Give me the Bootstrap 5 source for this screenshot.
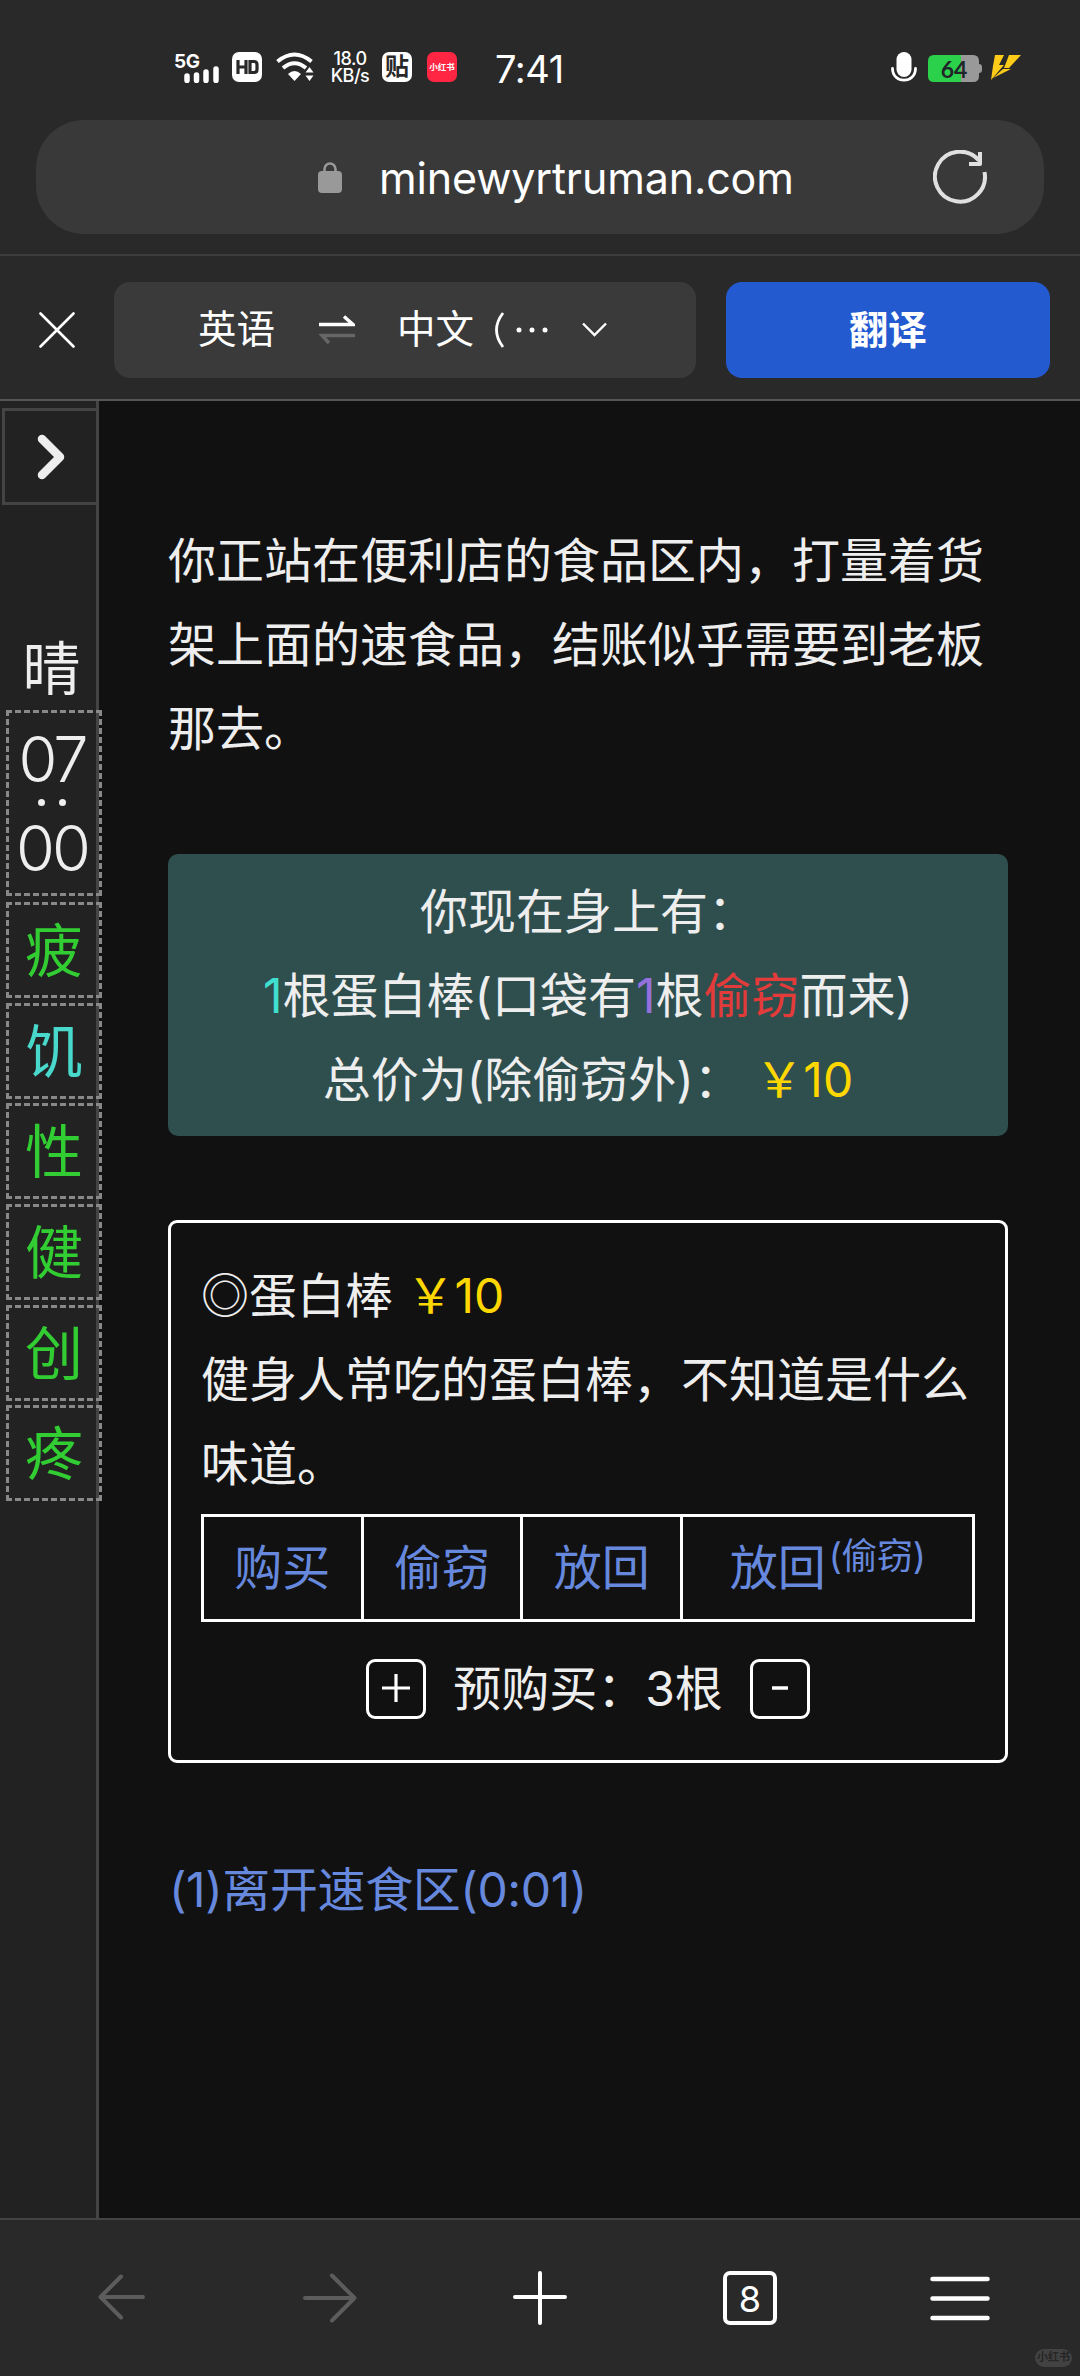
<!DOCTYPE html>
<html lang="zh-CN">
<head>
<meta charset="utf-8">
<meta name="viewport" content="width=device-width, initial-scale=1">
<title>minewyrtruman.com</title>
<link href="https://cdn.jsdelivr.net/npm/bootstrap@5.3.0/dist/css/bootstrap.min.css" rel="stylesheet">
<style>
html,body{height:2376px;overflow:hidden}
body{width:1080px;background:#292929;color:#fff;font-family:Inter,"Noto Sans CJK SC",sans-serif;font-size:48px;line-height:84px}
svg{display:block;flex:none}
.statusbar{height:120px;padding:45px 59px 22px 174px;line-height:1}
.net{width:46px;height:31px}
.net b{font-size:19px;font-weight:700;letter-spacing:-.5px;line-height:19px}
.tile{width:30px;height:30px;border-radius:7px;background:#fff;color:#292929}
.speed{font-size:18px;line-height:17px;width:40px;margin:0 12px 0 16px;font-weight:500;letter-spacing:-.5px}
.clock{font-size:38px;line-height:40px;margin:4px 0 0 38px;letter-spacing:-.4px}
.batt{width:54px;height:27px;font:700 23px/28px Lato,sans-serif}
.urlbar{height:114px;margin:0 36px;border-radius:48px;background:#393939;padding:0 57px 0 282px}
.host{font-size:43px;margin-left:37px;letter-spacing:-.15px;padding-top:2px}
.transbar{height:147px;margin-top:20px;border-top:2px solid #3d3d3d;border-bottom:2px solid #555;padding:26px 30px 22px 39px;line-height:1;font-size:38.5px}
.langs{width:582px;height:96px;border-radius:16px;background:#3a3a3a;margin-left:39px;padding-left:84px}
.go{width:324px;height:96px;border-radius:16px;background:#235ad0;color:#fff;font-size:39px;font-weight:700;border:0}
.view{height:1817px;background:#111;color:#eee}
.side{width:99px;background:#222;border-right:3px solid #444;padding-top:7px;z-index:1}
.fold{width:94px;height:97px;margin-left:2px;border:3px solid #444;border-right:0;padding-left:32px}
.stat{width:96px;height:96px;margin:0 0 4.7px 6px;border:3px dashed #888;font-size:58px;line-height:1;flex:none;color:#32cd32;padding-top:2px}
.weather{height:70px;margin:129px 0 6px 7px;width:89px;font-size:58px;line-height:70px}
.time{height:186px;color:#eee;font-size:63px;font-weight:350;letter-spacing:-3px;margin-bottom:6px;padding:0 4px 0 0}
.dot{width:7px;height:7px;border-radius:50%;background:#eee}
.story{padding:118px 72px 0 69px}
.held{height:282px;margin-top:83px;padding-top:16px;border-radius:10px;background:#2f4f4f}
.item{height:543px;margin-top:84px;border:3px solid #fff;border-radius:9px;padding:31px 30px 0}
.acts{height:108px;margin-top:8px;border:3px solid #fff}
.acts a{width:159.7px;border-right:3px solid #fff}
.acts a:last-child{flex:1;width:auto;border:0}
.lk{color:#68d;text-decoration:none}
.sup{font-size:36px;line-height:36px;margin:-24px 0 0 3px;letter-spacing:-.4px}
.stepb{width:60px;height:60px;border:3px solid #fff;border-radius:9px;background:none;padding:0}
.qty{margin-top:25px;gap:27px}
.toolbar{height:157px;border-top:2px solid #444;padding:51px 90px 0 98px}
.tabs8{width:54px;height:54px;border:4px solid #fff;border-radius:7px;font-size:36px;line-height:48px}
.wm{position:absolute;right:8px;bottom:9px;width:37px;height:18px;border-radius:9px;background:#424242;color:#262626;font-size:11px;line-height:17px;font-weight:700}
</style>
</head>
<body class="position-relative">
<header class="statusbar d-flex justify-content-between">
  <div class="d-flex align-items-center" style="height:44px">
    <div class="net position-relative"><b class="d-block">5G</b>
      <svg class="position-absolute bottom-0 end-0" width="36" height="17"><path d="M3 10v4.500M12.500 9v5.500M22 6v8.500M32 3v11.500" stroke="#fff" stroke-width="5.500" stroke-linecap="round"/></svg></div>
    <div class="tile" style="margin-left:12px"><svg width="30" height="30" fill="none" stroke="#292929" stroke-width="3.200"><path d="M6 8v14M14 8v14M6 15h8M18 9.500h4q3 0 3 3v5q0 3-3 3h-4z"/></svg></div>
    <svg style="margin-left:14px" width="38" height="30" fill="none" stroke="#fff"><path d="M1.500 9.500Q18.500-4.500 35.500 9.500M7 16Q18.500 6.500 30 16" stroke-width="4"/><path d="M12 22Q18.500 16 25 22L18.500 29z" fill="#fff" stroke="none"/><path d="M33.500 15l4 5.500h-8zM33.500 29l4-5.500h-8z" fill="#fff" stroke="none"/></svg>
    <div class="speed text-center">18.0<br>KB/s</div>
    <div class="tile fw-bold text-center" style="font-size:24px;line-height:29px">贴</div>
    <div class="tile fw-bold text-center text-white text-nowrap" style="margin-left:15px;background:#fe2642;font-size:8.500px;line-height:30px">小红书</div>
    <div class="clock">7:41</div>
  </div>
  <div class="d-flex align-items-center" style="height:44px">
    <svg width="26" height="31"><rect x="5.500" y="0" width="15" height="25" rx="7.500" fill="#fff"/><path d="M1.500 16.500c0 15.500 23 15.500 23 0" fill="none" stroke="#fff" stroke-width="2.800" stroke-linecap="round"/></svg>
    <div class="batt position-relative text-center" style="margin-left:11px;margin-top:2px"><svg class="position-absolute top-0 start-0" width="54" height="27"><path d="M33 0h12q6 0 6 6v3q3 0 3 3v3q0 3-3 3v3q0 6-6 6H33z" fill="#999"/><path d="M6 0h27v27H6q-6 0-6-6V6q0-6 6-6z" fill="#2bd14b"/></svg><span class="position-relative text-dark" style="left:-1px">64</span></div>
    <svg style="margin-left:8px" width="31" height="25" fill="#fecb18"><path d="M5 0h9L9 10h5L1 25 3 11zM19 0h12L19 13h-5zM13 14h8L3 23z"/></svg>
  </div>
</header>
<div class="urlbar d-flex align-items-center">
  <svg width="24" height="31" fill="none"><path d="M6.500 12V7a5.500 5.500 0 0 1 11 0v5" stroke="#999" stroke-width="2.500"/><rect y="9" width="24" height="22" rx="4" fill="#999"/></svg>
  <span class="host">minewyrtruman.com</span>
  <svg class="ms-auto" width="54" height="54" fill="none" stroke="#e0e0e0" stroke-width="4"><path d="M51.500 22A25 25 0 1 1 46 10.500"/><path d="M47 2v12H36" stroke-linejoin="round"/></svg>
</div>
<div class="transbar d-flex align-items-center">
  <svg width="36" height="36" stroke="#fff" stroke-width="2.600" stroke-linecap="round"><path d="M1.500 1.500l33 33M34.500 1.500l-33 33"/></svg>
  <div class="langs d-flex align-items-center">
    <span>英语</span>
    <svg style="margin-left:44px" width="36" height="30" fill="none" stroke-width="3.500"><path d="M0 9.500h34L25 1.500" stroke="#fff"/><path d="M36 20.500H3l7 7.500" stroke="#666"/></svg>
    <span style="margin-left:42px">中文</span>
    <svg style="margin-left:19px" width="57" height="38" fill="none"><path d="M10 2Q-3 19 10 36" stroke="#fff" stroke-width="2.800"/><g fill="#fff"><circle cx="26" cy="19" r="2.500"/><circle cx="39" cy="19" r="2.500"/><circle cx="52" cy="19" r="2.500"/></g></svg>
    <svg style="margin-left:32px" width="25" height="15" fill="none" stroke="#fff" stroke-width="2.400"><path d="M1 1.500l11.500 11.500L24 1.500"/></svg>
  </div>
  <button class="go ms-auto">翻译</button>
</div>
<div class="view d-flex">
  <aside class="side d-flex flex-column flex-shrink-0">
    <div class="fold d-flex align-items-center"><svg width="28" height="46" fill="none" stroke="#eee" stroke-width="8.500" stroke-linecap="round" stroke-linejoin="round"><path d="M5 5l18 18L5 41"/></svg></div>
    <div class="weather text-center">晴</div>
    <div class="stat time d-flex flex-column align-items-center justify-content-center"><span style="height:68px;line-height:66px">07</span><div class="d-flex" style="gap:14px;height:13px;padding-top:5px"><i class="dot"></i><i class="dot"></i></div><span style="height:74px;line-height:82px">00</span></div>
    <div class="stat d-flex align-items-center justify-content-center">疲</div>
    <div class="stat d-flex align-items-center justify-content-center" style="color:#48d8cc">饥</div>
    <div class="stat d-flex align-items-center justify-content-center">性</div>
    <div class="stat d-flex align-items-center justify-content-center">健</div>
    <div class="stat d-flex align-items-center justify-content-center">创</div>
    <div class="stat d-flex align-items-center justify-content-center">疼</div>
  </aside>
  <main class="story flex-grow-1">
    <p class="m-0">你正站在便利店的食品区内，打量着货架上面的速食品，结账似乎需要到老板那去。</p>
    <section class="held text-center">
      <div>你现在身上有：</div>
      <div><span style="color:#40e0d0">1</span>根蛋白棒(口袋有<span style="color:#9370db">1</span>根<span style="color:#e33a3a">偷窃</span>而来)</div>
      <div>总价为(除偷窃外)： <span style="color:#ffd700">￥10</span></div>
    </section>
    <section class="item">
      <div>◎蛋白棒 <span style="color:#ffd700">￥10</span></div>
      <div>健身人常吃的蛋白棒，不知道是什么味道。</div>
      <div class="acts d-flex text-center">
        <a class="lk d-flex align-items-center justify-content-center">购买</a>
        <a class="lk d-flex align-items-center justify-content-center">偷窃</a>
        <a class="lk d-flex align-items-center justify-content-center">放回</a>
        <a class="lk d-flex align-items-center justify-content-center">放回<span class="sup">(偷窃)</span></a>
      </div>
      <div class="qty d-flex justify-content-center align-items-center">
        <div class="stepb"><svg width="54" height="54" stroke="#fff" stroke-width="3.200"><path d="M13 26h28M27 12v28"/></svg></div>
        <span>预购买：3根</span>
        <div class="stepb"><svg width="54" height="54" stroke="#fff" stroke-width="3.500"><path d="M19 26h16"/></svg></div>
      </div>
    </section>
    <p style="margin:85px 0 0 1px;letter-spacing:-.4px"><a class="lk">(1)离开速食区(0:01)</a></p>
  </main>
</div>
<nav class="toolbar d-flex align-items-start">
  <svg width="47" height="54" fill="none" stroke="#5c5c5c" stroke-width="4" stroke-linecap="round" stroke-linejoin="round"><path d="M45 26H2.500M23 5.500L2.500 26 23 46.500"/></svg>
  <svg style="margin-left:158px" width="54" height="54" fill="none" stroke="#5c5c5c" stroke-width="4" stroke-linecap="round" stroke-linejoin="round"><path d="M2 27h49.500M29 4.500L51.500 27 29 49.500"/></svg>
  <svg style="margin-left:156px" width="54" height="54" stroke="#fff" stroke-width="4" stroke-linecap="round"><path d="M2 26h50M27 2v50"/></svg>
  <div class="tabs8 text-center" style="margin-left:156px">8</div>
  <svg style="margin-left:153px" width="60" height="54" stroke="#fff" stroke-width="4.500" stroke-linecap="round"><path d="M2.500 8h55M2.500 27.500h55M2.500 47h55"/></svg>
</nav>
<div class="wm text-center">小红书</div>
<script src="https://cdn.jsdelivr.net/npm/bootstrap@5.3.0/dist/js/bootstrap.bundle.min.js"></script>
</body>
</html>
